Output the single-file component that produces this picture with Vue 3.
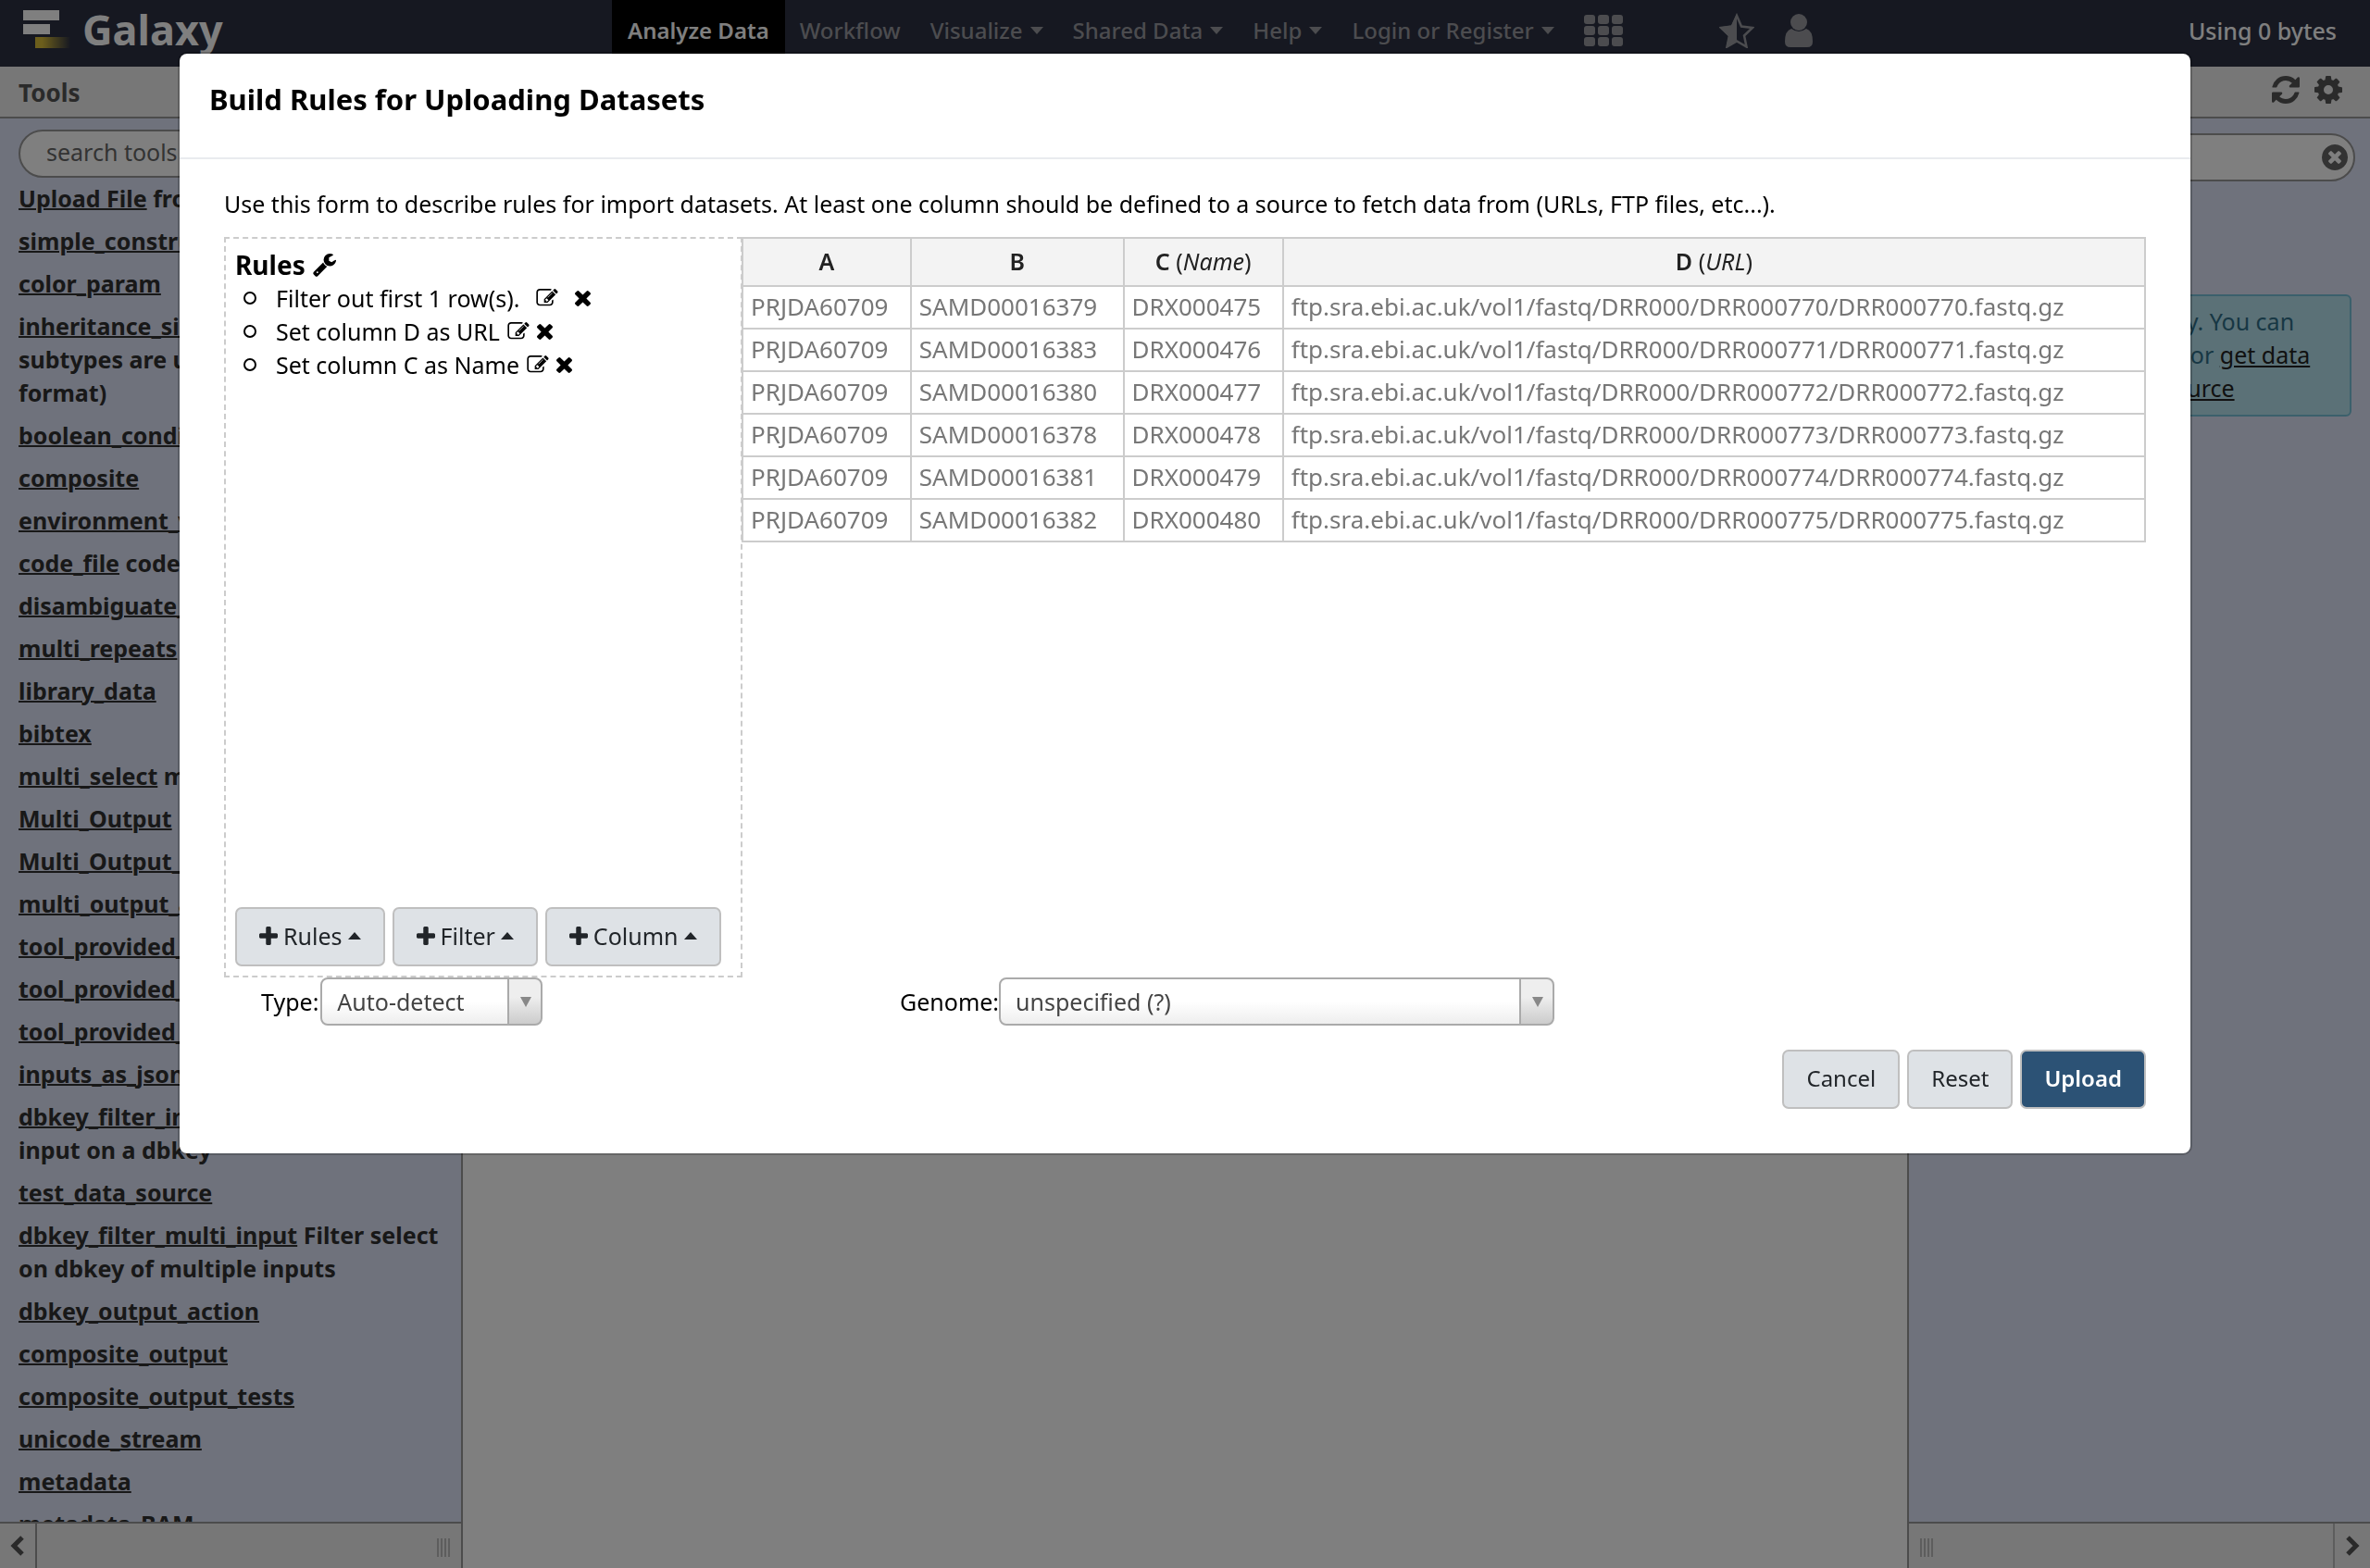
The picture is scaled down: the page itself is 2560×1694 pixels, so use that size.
<script setup>
import { ref } from 'vue'

const icons = {
  plus: 'M1600 736v192q0 40-28 68t-68 28h-416v416q0 40-28 68t-68 28h-192q-40 0-68-28t-28-68v-416h-416q-40 0-68-28t-28-68v-192q0-40 28-68t68-28h416v-416q0-40 28-68t68-28h192q40 0 68 28t28 68v416h416q40 0 68 28t28 68z',
  times: 'M1490 1322q0 40-28 68l-136 136q-28 28-68 28t-68-28l-294-294-294 294q-28 28-68 28t-68-28l-136-136q-28-28-28-68t28-68l294-294-294-294q-28-28-28-68t28-68l136-136q28-28 68-28t68 28l294 294 294-294q28-28 68-28t68 28l136 136q28 28 28 68t-28 68l-294 294 294 294q28 28 28 68z',
  edit: 'M888 1184l116-116-152-152-116 116v56h96v96h56zm440-720q-16-16-33 1l-350 350q-17 17-1 33t33-1l350-350q17-17 1-33zm80 594v190q0 119-84.5 203.5t-203.5 84.5h-832q-119 0-203.5-84.5t-84.5-203.5v-832q0-119 84.5-203.5t203.5-84.5h832q63 0 117 25 15 7 18 23 3 17-9 29l-49 49q-14 14-32 8-23-6-45-6h-832q-66 0-113 47t-47 113v832q0 66 47 113t113 47h832q66 0 113-47t47-113v-126q0-13 9-22l64-64q15-15 35-7t20 29zm-96-738l288 288-672 672h-288v-288zm444 132l-92 92-288-288 92-92q28-28 68-28t68 28l152 152q28 28 28 68t-28 68z',
  wrench: 'M448 1472q0-26-19-45t-45-19-45 19-19 45 19 45 45 19 45-19 19-45zm644-420l-682 682q-37 37-90 37-52 0-91-37l-106-108q-38-36-38-90 0-53 38-91l681-681q39 98 114.5 173.5t173.5 114.5zm634-435q0 39-23 106-47 134-164.5 217.5t-258.5 83.5q-185 0-316.5-131.5t-131.5-316.5 131.5-316.5 316.5-131.5q58 0 121.5 16.5t107.5 46.5q16 11 16 28t-16 28l-293 169v224l193 107q5-3 79-48.5t135.5-81 70.5-35.5q15 0 23.5 10t8.5 25z',
  refresh: 'M1639 1056q0 5-1 7-64 268-268 434.5t-478 166.5q-146 0-282.5-55t-243.5-157l-129 129q-19 19-45 19t-45-19-19-45v-448q0-26 19-45t45-19h448q26 0 45 19t19 45-19 45l-137 137q71 66 161 102t187 36q134 0 250-65t186-179q11-17 53-117 8-23 30-23h192q13 0 22.5 9.5t9.5 22.5zm25-800v448q0 26-19 45t-45 19h-448q-26 0-45-19t-19-45 19-45l138-138q-148-137-349-137-134 0-250 65t-186 179q-11 17-53 117-8 23-30 23h-199q-13 0-22.5-9.5t-9.5-22.5v-7q65-268 270-434.5t480-166.5q146 0 284 55.5t245 156.5l130-129q19-19 45-19t45 19 19 45z',
  cog: 'M1152 896q0-106-75-181t-181-75-181 75-75 181 75 181 181 75 181-75 75-181zm512-109v222q0 12-8 23t-20 13l-185 28q-19 54-39 91 35 50 107 138 10 12 10 25t-9 23q-27 37-99 108t-94 71q-12 0-26-9l-138-108q-44 23-91 38-16 136-29 186-7 28-36 28h-222q-14 0-24.5-8.5t-11.5-21.5l-28-184q-49-16-90-37l-141 107q-10 9-25 9-14 0-25-11-126-114-165-168-7-10-7-23 0-12 8-23 15-21 51-66.5t54-70.5q-27-50-41-99l-183-27q-13-2-21-12.5t-8-23.5v-222q0-12 8-23t19-13l186-28q14-46 39-92-40-57-107-138-10-12-10-24 0-10 9-23 26-36 98.5-107.5t94.5-71.5q13 0 26 10l138 107q44-23 91-38 16-136 29-186 7-28 36-28h222q14 0 24.5 8.5t11.5 21.5l28 184q49 16 90 37l142-107q9-9 24-9 13 0 25 10 129 119 165 170 7 8 7 22 0 12-8 23-15 21-51 66.5t-54 70.5q26 50 41 98l183 28q13 2 21 12.5t8 23.5z',
  clear: 'M1277 1122q0-26-19-45l-181-181 181-181q19-19 19-45 0-27-19-46l-90-90q-19-19-46-19-26 0-45 19l-181 181-181-181q-19-19-45-19-27 0-46 19l-90 90q-19 19-19 46 0 26 19 45l181 181-181 181q-19 19-19 45 0 27 19 46l90 90q19 19 46 19 26 0 45-19l181-181 181 181q19 19 45 19 27 0 46-19l90-90q19-19 19-46zm387-226q0 209-103 385.5t-279.5 279.5-385.5 103-385.5-103-279.5-279.5-103-385.5 103-385.5 279.5-279.5 385.5-103 385.5 103 279.5 279.5 103 385.5z'
}

const menu = [
  { label: 'Analyze Data', active: true },
  { label: 'Workflow' },
  { label: 'Visualize', caret: true },
  { label: 'Shared Data', caret: true },
  { label: 'Help', caret: true },
  { label: 'Login or Register', caret: true }
]

const tools = [
  { name: 'Upload File', text: ['from your computer'] },
  { name: 'simple_constructs' },
  { name: 'color_param' },
  { name: 'inheritance_simple', text: ['(visible if', 'subtypes are usable as a', 'format)'] },
  { name: 'boolean_conditional' },
  { name: 'composite' },
  { name: 'environment_variables' },
  { name: 'code_file', text: ['code file'] },
  { name: 'disambiguate_cond' },
  { name: 'multi_repeats' },
  { name: 'library_data' },
  { name: 'bibtex' },
  { name: 'multi_select', text: ['multi select'] },
  { name: 'Multi_Output' },
  { name: 'Multi_Output_Configured' },
  { name: 'multi_output_assign' },
  { name: 'tool_provided_metadata_1' },
  { name: 'tool_provided_metadata_2' },
  { name: 'tool_provided_metadata_3' },
  { name: 'inputs_as_json' },
  { name: 'dbkey_filter_input', text: ['Filter', 'input on a dbkey'] },
  { name: 'test_data_source' },
  { name: 'dbkey_filter_multi_input', text: ['Filter select', 'on dbkey of multiple inputs'] },
  { name: 'dbkey_output_action' },
  { name: 'composite_output' },
  { name: 'composite_output_tests' },
  { name: 'unicode_stream' },
  { name: 'metadata' },
  { name: 'metadata_BAM' }
]

const rules = [
  { text: 'Filter out first 1 row(s).', spaced: true },
  { text: 'Set column D as URL' },
  { text: 'Set column C as Name' }
]

const columns = [
  { letter: 'A' },
  { letter: 'B' },
  { letter: 'C', target: 'Name' },
  { letter: 'D', target: 'URL' }
]

const url = (n) => `ftp.sra.ebi.ac.uk/vol1/fastq/DRR000/DRR000${n}/DRR000${n}.fastq.gz`
const rows = [
  ['PRJDA60709', 'SAMD00016379', 'DRX000475', url(770)],
  ['PRJDA60709', 'SAMD00016383', 'DRX000476', url(771)],
  ['PRJDA60709', 'SAMD00016380', 'DRX000477', url(772)],
  ['PRJDA60709', 'SAMD00016378', 'DRX000478', url(773)],
  ['PRJDA60709', 'SAMD00016381', 'DRX000479', url(774)],
  ['PRJDA60709', 'SAMD00016382', 'DRX000480', url(775)]
]

const adders = ['Rules', 'Filter', 'Column']
const fileType = ref('auto')
const genome = ref('?')
</script>

<template>
  <div class="app">
    <header class="masthead">
      <a class="brand" href="#">
        <svg class="logo" viewBox="0 0 52 44" aria-hidden="true">
          <defs>
            <linearGradient id="tail">
              <stop offset="0.2" stop-color="#d8bc38" />
              <stop offset="1" stop-color="#d8bc38" stop-opacity="0" />
            </linearGradient>
          </defs>
          <rect x="0" y="1" width="39" height="11" fill="#fff" />
          <rect x="0" y="16" width="29" height="11" fill="#fff" />
          <rect x="13" y="30" width="38" height="12" fill="url(#tail)" />
        </svg>
        <span>Galaxy</span>
      </a>
      <nav class="menu">
        <a v-for="m in menu" :key="m.label" href="#" class="menu-item" :class="{ active: m.active }">
          {{ m.label }}<i v-if="m.caret" class="caret down"></i>
        </a>
        <a href="#" class="menu-icon apps" aria-label="Apps">
          <svg viewBox="0 0 42 34" width="42" height="34">
            <template v-for="r in 3" :key="r">
              <rect v-for="c in 3" :key="c" :x="(c - 1) * 15" :y="(r - 1) * 12" width="12" height="10" rx="3" />
            </template>
          </svg>
        </a>
        <a href="#" class="menu-icon" aria-label="Favorites">
          <svg viewBox="0 0 38 38" width="38" height="38">
            <path d="M19 3l5 11.500 12 1.500-9 8.500 2.500 12L19 30.500 8.500 36.500l2.500-12L2 16l12-1.500z" fill="none" stroke="currentColor" stroke-width="2.500" />
            <path d="M19 1v30L7.500 38l2.500-13L0 15.500l13-2z" />
          </svg>
        </a>
        <a href="#" class="menu-icon" aria-label="Account">
          <svg viewBox="0 0 32 38" width="32" height="38">
            <ellipse cx="16" cy="10" rx="9" ry="9" />
            <path d="M8 17q8 6 16 0 7 2 7 14 0 6-6 6H7q-6 0-6-6 0-12 7-14z" />
          </svg>
        </a>
      </nav>
      <span class="quota">Using 0 bytes</span>
    </header>

    <div class="workspace">
      <aside class="panel left">
        <div class="panel-head"><h2>Tools</h2></div>
        <div class="panel-body">
          <input class="search tool-search" type="text" placeholder="search tools" aria-label="search tools" />
          <ul class="tools">
            <li v-for="t in tools" :key="t.name">
              <a href="#">{{ t.name }}</a>
              <template v-for="(line, i) in t.text || []" :key="i">
                <br v-if="i > 0" />{{ ' ' + line }}
              </template>
            </li>
          </ul>
        </div>
        <div class="panel-foot">
          <button class="fold" type="button" aria-label="Collapse tools">
            <svg viewBox="0 0 16 24" width="16" height="24"><path d="M13 3L4 12l9 9" /></svg>
          </button>
          <span class="grip"></span>
        </div>
      </aside>

      <main class="center"></main>

      <aside class="panel right">
        <div class="panel-head">
          <button class="head-icon" type="button" aria-label="Refresh history">
            <svg viewBox="128 128 1536 1536" width="30" height="30"><path :d="icons.refresh" /></svg>
          </button>
          <button class="head-icon" type="button" aria-label="History options">
            <svg viewBox="128 128 1536 1536" width="30" height="30"><path :d="icons.cog" /></svg>
          </button>
        </div>
        <div class="panel-body">
          <div class="search history-search">
            <input type="text" aria-label="search datasets" />
            <button type="button" aria-label="Clear search">
              <svg viewBox="128 128 1536 1536" width="28" height="28"><path :d="icons.clear" /></svg>
            </button>
          </div>
          <p class="notice">
            This history is empty. You can<br />
            <a href="#">load your own data</a> or <a href="#">get data</a><br />
            <a href="#">from an external source</a>
          </p>
        </div>
        <div class="panel-foot">
          <span class="grip"></span>
          <button class="fold" type="button" aria-label="Collapse history">
            <svg viewBox="0 0 16 24" width="16" height="24"><path d="M3 3l9 9-9 9" /></svg>
          </button>
        </div>
      </aside>
    </div>

    <div class="backdrop">
      <section class="modal" role="dialog" aria-labelledby="dialog-title">
        <header class="modal-head">
          <h1 id="dialog-title">Build Rules for Uploading Datasets</h1>
        </header>
        <div class="modal-body">
          <p class="intro">
            Use this form to describe rules for import datasets. At least one column should be defined to a source to fetch data from (URLs, FTP files, etc...).
          </p>
          <div class="builder">
            <div class="rules">
              <h3>
                Rules
                <svg viewBox="64 64 1728 1728" width="26" height="26"><path :d="icons.wrench" /></svg>
              </h3>
              <ol>
                <li v-for="r in rules" :key="r.text" :class="{ spaced: r.spaced }">
                  <span>{{ r.text }}</span>
                  <button type="button" aria-label="Edit rule">
                    <svg viewBox="0 128 1792 1536" width="24" height="20"><path :d="icons.edit" /></svg>
                  </button>
                  <button type="button" aria-label="Remove rule">
                    <svg viewBox="302 366 1188 1188" width="17" height="17"><path :d="icons.times" /></svg>
                  </button>
                </li>
              </ol>
              <div class="adders">
                <button v-for="a in adders" :key="a" class="btn" type="button">
                  <svg viewBox="192 128 1408 1408" width="20" height="20"><path :d="icons.plus" /></svg>
                  <span>{{ a }}</span>
                  <i class="caret up"></i>
                </button>
              </div>
            </div>
            <table class="grid">
              <thead>
                <tr>
                  <th v-for="c in columns" :key="c.letter" scope="col">
                    {{ c.letter }}<span v-if="c.target"> (<em>{{ c.target }}</em>)</span>
                  </th>
                </tr>
              </thead>
              <tbody>
                <tr v-for="row in rows" :key="row[1]">
                  <td v-for="cell in row" :key="cell">{{ cell }}</td>
                </tr>
              </tbody>
            </table>
          </div>
          <div class="options">
            <div class="option type">
              <label for="file-type">Type:</label>
              <span class="select">
                <select id="file-type" v-model="fileType"><option value="auto">Auto-detect</option></select>
              </span>
            </div>
            <div class="option genome">
              <label for="genome">Genome:</label>
              <span class="select">
                <select id="genome" v-model="genome"><option value="?">unspecified (?)</option></select>
              </span>
            </div>
          </div>
          <div class="actions">
            <button class="btn" type="button">Cancel</button>
            <button class="btn" type="button">Reset</button>
            <button class="btn primary" type="button">Upload</button>
          </div>
        </div>
      </section>
    </div>
  </div>
</template>

<style>
html,
body {
  margin: 0;
  overflow: hidden;
}
</style>

<style scoped>
* {
  box-sizing: border-box;
}
.app {
  height: 100vh;
  display: flex;
  flex-direction: column;
  font: 25px/36px "Noto Sans", "Open Sans", sans-serif;
  color: #303030;
}
h1,
h2,
h3,
p,
ul,
ol {
  margin: 0;
  padding: 0;
}
button,
input,
select {
  font: inherit;
  margin: 0;
}
button {
  border: 0;
  padding: 0;
  background: none;
  color: inherit;
}
svg {
  fill: currentColor;
}

/* Masthead */
.masthead {
  display: flex;
  flex: none;
  height: 72px;
  background: #2c3143;
  color: #98999f;
}
.masthead a {
  color: inherit;
  text-decoration: none;
}
.masthead .brand {
  display: flex;
  align-items: center;
  gap: 12px;
  width: 661px;
  height: 64px;
  padding-left: 25px;
  color: #fff;
  font-size: 45px;
  font-weight: 700;
}
.logo {
  width: 52px;
  height: 44px;
}
.menu {
  display: flex;
  flex: 1;
  height: 66px;
  font-size: 24px;
}
.menu-item {
  display: flex;
  align-items: center;
  gap: 8px;
  padding: 0 16px;
  font-weight: 500;
}
.masthead .active {
  height: 72px;
  padding: 0 17px 6px;
  background: #000;
  color: #fff;
  font-weight: 600;
}
.menu-icon {
  display: flex;
  align-items: center;
  padding: 0 16px;
}
.apps {
  margin-right: 72px;
}
.quota {
  padding: 15px 36px 0 0;
  color: #fff;
  font-weight: 500;
}
.caret {
  border: 7px solid transparent;
}
.caret.down {
  border-top: 8px solid currentColor;
  border-bottom: 0;
}
.caret.up {
  border-bottom: 8px solid currentColor;
  border-top: 0;
}

/* Side panels */
.workspace {
  display: flex;
  flex: 1;
  min-height: 0;
}
.center {
  flex: 1;
  background: #fff;
}
.panel {
  display: flex;
  flex-direction: column;
  width: 500px;
  background: #dfe5f9;
}
.panel.left {
  border-right: 2px solid #999;
}
.panel.right {
  border-left: 2px solid #999;
}
.panel-head {
  display: flex;
  align-items: center;
  height: 56px;
  padding: 2px 20px 0;
  border-bottom: 2px solid #999;
  background: #eee;
  color: #555;
}
.panel-head h2 {
  font-size: 26px;
  font-weight: 700;
}
.right .panel-head {
  justify-content: flex-end;
  gap: 16px;
  padding: 0 30px 4px;
}
.head-icon {
  display: flex;
}
.panel-body {
  flex: 1;
  min-height: 0;
  overflow: hidden;
  padding: 12px 16px 0 20px;
}
.search {
  display: block;
  width: 100%;
  height: 52px;
  padding: 0 28px;
  border: 2px solid #999;
  border-radius: 26px;
  background: #fff;
}
.tool-search {
  padding-bottom: 4px;
}
.search::placeholder {
  color: #666;
  opacity: 1;
}
.history-search {
  display: flex;
  align-items: center;
  margin-top: 4px;
  padding-right: 6px;
  color: #666;
}
.history-search input {
  flex: 1;
  border: 0;
  background: none;
}
.history-search button {
  display: flex;
}
.tools {
  list-style: none;
  padding-top: 4px;
  font-weight: 700;
  white-space: nowrap;
}
.tools li {
  margin-bottom: 10px;
}
.tools a {
  color: #303030;
  text-decoration-thickness: 2px;
}
.notice {
  margin: 122px 4px 0 0;
  padding: 9px 0 11px 49px;
  border: 2px solid #76c0d8;
  border-radius: 6px;
  background: #b7e2ee;
  color: #2f6f88;
  white-space: nowrap;
}
.notice a {
  color: #222;
}
.panel-foot {
  display: flex;
  flex: none;
  align-items: center;
  justify-content: space-between;
  height: 50px;
  border-top: 2px solid #999;
  background: #eee;
}
.fold {
  display: flex;
  align-items: center;
  justify-content: center;
  width: 40px;
  height: 100%;
}
.left .fold {
  border-right: 2px solid #999;
}
.right .fold {
  border-left: 2px solid #bbb;
}
.fold path {
  fill: none;
  stroke: #555;
  stroke-width: 5;
}
.grip {
  width: 14px;
  height: 20px;
  margin: 4px 12px 0;
  background: repeating-linear-gradient(90deg, #bbb 0 2px, #eee 2px 4px);
}

/* Dialog */
.backdrop {
  position: fixed;
  inset: 0;
  padding-top: 56px;
  background: rgba(0, 0, 0, 0.5);
}
.modal {
  width: 85%;
  margin: 0 auto;
  border: 2px solid rgba(0, 0, 0, 0.2);
  border-radius: 10px;
  background: #fff;
  background-clip: padding-box;
  color: #000;
}
.modal-head {
  padding: 31px 32px 45px;
  border-bottom: 2px solid #e9ebef;
}
.modal-head h1 {
  font-size: 31px;
  font-weight: 700;
  line-height: 36px;
}
.modal-body {
  padding: 30px 48px 48px;
}
.intro {
  padding-bottom: 18px;
}
.builder {
  display: flex;
  align-items: flex-start;
}
.rules {
  display: flex;
  flex: none;
  flex-direction: column;
  width: 560px;
  height: 800px;
  padding: 10px;
  border: 2px dashed #ccc;
}
.rules h3 {
  display: flex;
  align-items: center;
  gap: 8px;
  font-size: 28px;
  font-weight: 700;
  line-height: 36px;
}
.rules ol {
  flex: 1;
  list-style: none;
}
.rules li {
  display: flex;
  align-items: center;
  gap: 8px;
  padding-left: 9px;
}
.rules li::before {
  content: "";
  width: 10px;
  height: 10px;
  margin-right: 13px;
  border: 2px solid #000;
  border-radius: 50%;
}
.rules li.spaced button {
  margin-left: 10px;
}
.rules li svg {
  display: block;
}
.adders {
  display: flex;
  gap: 8px;
}
.btn {
  display: flex;
  align-items: center;
  justify-content: center;
  gap: 6px;
  height: 64px;
  padding: 0 24px 2px;
  border: 2px solid #bfbfbf;
  border-radius: 7px;
  background: #dee2e6;
  color: #212529;
}
.primary {
  background: #2c5275;
  color: #fff;
  font-weight: 600;
}
.grid {
  flex: 1;
  margin-left: -1px;
  border-collapse: collapse;
  white-space: nowrap;
}
.grid th,
.grid td {
  height: 46px;
  padding: 0 8px 2px;
  border: 2px solid #ccc;
  line-height: 36px;
}
.grid th {
  height: 52px;
  background: #f3f3f3;
  color: #222;
  font-weight: 600;
}
.grid th span {
  font-weight: 400;
}
.grid td {
  color: #777;
  font-size: 26px;
}
.options {
  display: flex;
  height: 52px;
}
.option {
  display: flex;
  align-items: center;
}
.type {
  gap: 2px;
  width: 730px;
  padding-left: 40px;
}
.select {
  position: relative;
  display: flex;
  width: 240px;
}
.genome .select {
  width: 600px;
}
.select::after {
  content: "";
  position: absolute;
  top: 21px;
  right: 12px;
  border: 6px solid transparent;
  border-top: 11px solid #888;
  border-bottom: 0;
  pointer-events: none;
}
.select select {
  appearance: none;
  width: 100%;
  height: 52px;
  padding: 0 50px 0 16px;
  border: 2px solid #aaa;
  border-radius: 8px;
  background:
    linear-gradient(#aaa, #aaa) right 34px top / 2px 100% no-repeat,
    linear-gradient(#eee 40%, #ccc) right / 34px 100% no-repeat,
    linear-gradient(#fff 50%, #eee);
  color: #444;
}
.actions {
  display: flex;
  justify-content: flex-end;
  gap: 8px;
  padding-top: 26px;
}
.actions .btn {
  font-size: 24px;
}
</style>
